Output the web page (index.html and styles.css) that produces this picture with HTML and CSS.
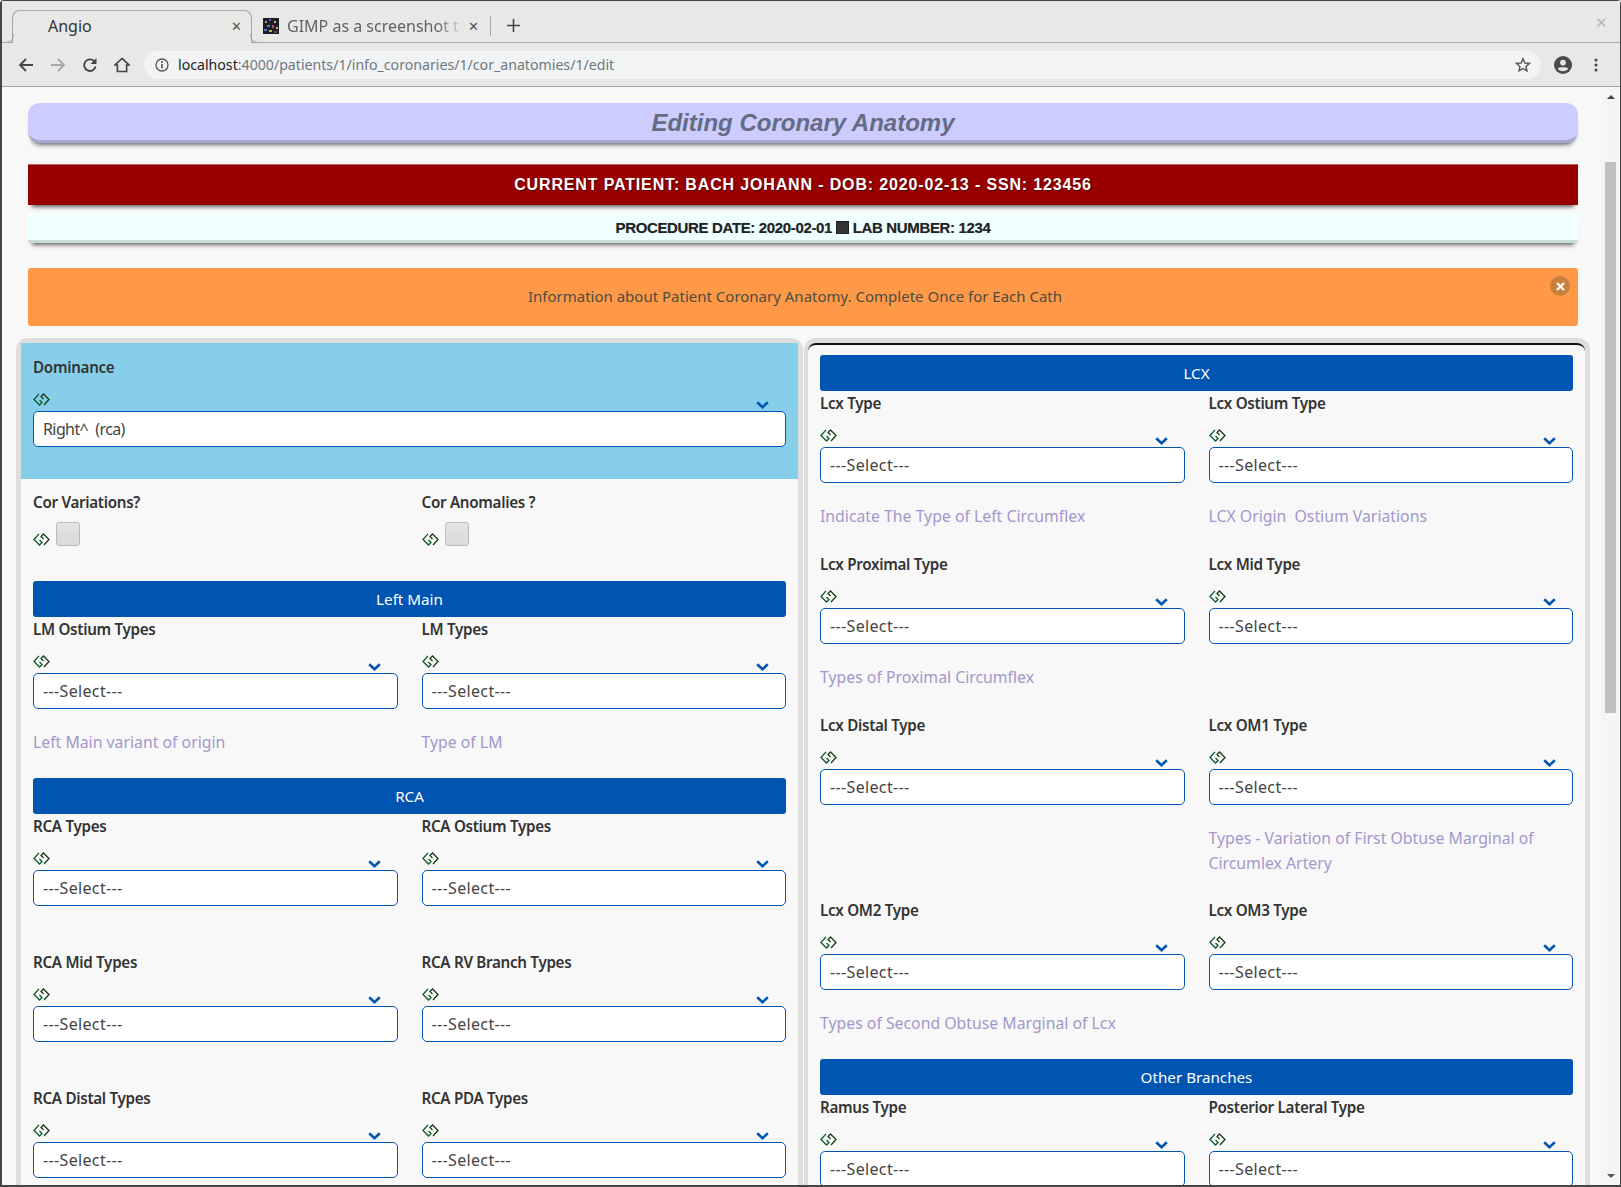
FILE: index.html
```html
<!DOCTYPE html>
<html>
<head>
  <title>Angio</title>
  <meta charset="UTF-8">
  <link rel="stylesheet" href="styles.css">
</head>
<body>
  <svg class="defs" width="0" height="0">
    <symbol id="link" viewBox="0 0 17 13">
      <path d="M6 .9 1 6.500 6.500 12 9 9.500 6.500 7" fill="none" stroke="#0b5a2a" stroke-width="1.300"/>
      <path d="M11 12 16 6.500 10.500 1 8 3.500 10.500 6" fill="none" stroke="#1a3d14" stroke-width="1.300"/>
    </symbol>
    <symbol id="chev" viewBox="0 0 13 8">
      <path d="M1.200 1.300 6.500 6.200 11.800 1.300" fill="none" stroke="#0055b3" stroke-width="2.600"/>
    </symbol>
  </svg>

  <div class="browser">
    <div class="tabstrip">
      <div class="tab tab-active">
        <span class="tab-title">Angio</span>
        <span class="tab-close">&#10005;</span>
      </div>
      <div class="tab tab-other">
        <svg class="favicon" width="16" height="16" viewBox="0 0 16 16">
          <rect width="16" height="16" fill="#1c1c30"/>
          <rect x="2" y="3" width="2" height="2" fill="#c9a227"/>
          <rect x="6" y="1" width="2" height="2" fill="#8a4fa8"/>
          <rect x="11" y="3" width="2" height="2" fill="#d0c040"/>
          <rect x="4" y="7" width="3" height="2" fill="#4f9a50"/>
          <rect x="9" y="7" width="2" height="3" fill="#c94f4f"/>
          <rect x="13" y="9" width="2" height="2" fill="#e0b030"/>
          <rect x="1" y="11" width="3" height="2" fill="#5a7ac0"/>
          <rect x="6" y="12" width="3" height="2" fill="#b8c040"/>
          <rect x="11" y="13" width="3" height="2" fill="#7a5020"/>
        </svg>
        <span class="tab-title">GIMP as a screenshot t</span>
        <span class="tab-close">&#10005;</span>
      </div>
      <span class="tab-sep"></span>
      <span class="tab-new">
        <svg width="13" height="13" viewBox="0 0 13 13"><path d="M6.500 0v13M0 6.500h13" stroke="#444" stroke-width="1.600"/></svg>
      </span>
      <span class="win-close">&#10005;</span>
    </div>

    <div class="toolbar">
      <svg class="tool" width="16" height="16" viewBox="0 0 16 16"><path d="M15 8H2M8 2 2 8l6 6" fill="none" stroke="#444" stroke-width="1.800"/></svg>
      <svg class="tool" width="16" height="16" viewBox="0 0 16 16"><path d="M1 8h13M8 2l6 6-6 6" fill="none" stroke="#a8a8a8" stroke-width="1.800"/></svg>
      <svg class="tool" width="16" height="16" viewBox="0 0 16 16"><path d="M13.600 9.500A5.800 5.800 0 1 1 12 4" fill="none" stroke="#444" stroke-width="1.900"/><path d="M14.500 1v6h-6z" fill="#444"/></svg>
      <svg class="tool" width="16" height="16" viewBox="0 0 16 16"><path d="M8 1.500 1 8h2.400v6.500h9.200V8H15z" fill="none" stroke="#444" stroke-width="1.700"/></svg>
      <div class="omnibox">
        <svg class="info" width="14" height="14" viewBox="0 0 14 14"><circle cx="7" cy="7" r="6" fill="none" stroke="#555" stroke-width="1.300"/><path d="M7 6v4.400" stroke="#555" stroke-width="1.600"/><circle cx="7" cy="3.900" r="1" fill="#555"/></svg>
        <span class="url"><b>localhost</b>:4000/patients/1/info_coronaries/1/cor_anatomies/1/edit</span>
        <svg class="star" width="16" height="16" viewBox="0 0 16 16"><path d="M8 1.800 9.900 6l4.500.4-3.400 3 1 4.500L8 11.500l-4 2.400 1-4.500-3.400-3L6.100 6z" fill="none" stroke="#555" stroke-width="1.400"/></svg>
      </div>
      <svg class="avatar" width="18" height="18" viewBox="0 0 18 18"><circle cx="9" cy="9" r="9" fill="#4a4a4a"/><circle cx="9" cy="6.600" r="2.900" fill="#e8e8e6"/><path d="M3.600 12.400C5 10.700 13 10.700 14.400 12.400 13.200 14.200 11.200 15.200 9 15.200S4.800 14.200 3.600 12.400z" fill="#e8e8e6"/></svg>
      <svg class="dots" width="4" height="14" viewBox="0 0 4 14"><circle cx="2" cy="2" r="1.500" fill="#444"/><circle cx="2" cy="7" r="1.500" fill="#444"/><circle cx="2" cy="12" r="1.500" fill="#444"/></svg>
    </div>

    <div class="viewport">
      <div class="page">
        <h1 class="page-title">Editing Coronary Anatomy</h1>
        <div class="patient">CURRENT PATIENT: BACH JOHANN - DOB: 2020-02-13 - SSN: 123456</div>
        <div class="procedure">PROCEDURE DATE: 2020-02-01 <span class="tofu"></span> LAB NUMBER: 1234</div>
        <div class="notice">
          Information about Patient Coronary Anatomy. Complete Once for Each Cath
          <span class="notice-close">
            <svg width="9" height="9" viewBox="0 0 9 9"><path d="M1 1l7 7M8 1 1 8" stroke="#fff" stroke-width="2.200"/></svg>
          </span>
        </div>

        <div class="panels">
          <div class="panel">
            <div class="dominance">
              <div class="field">
                <label>Dominance</label>
                <div class="field-head"><svg class="ico"><use href="#link"/></svg><svg class="chev"><use href="#chev"/></svg></div>
                <select class="picker"><option>Right^&nbsp; (rca)</option></select>
              </div>
            </div>
            <div class="panel-body">
              <div class="row row-checks">
                <div class="field">
                  <label>Cor Variations?</label>
                  <div class="check-line"><svg class="ico"><use href="#link"/></svg><input type="checkbox" class="check"></div>
                </div>
                <div class="field">
                  <label>Cor Anomalies ?</label>
                  <div class="check-line"><svg class="ico"><use href="#link"/></svg><input type="checkbox" class="check"></div>
                </div>
              </div>

              <div class="bar">Left Main</div>
              <div class="row">
                <div class="field">
                  <label>LM Ostium Types</label>
                  <div class="field-head"><svg class="ico"><use href="#link"/></svg><svg class="chev"><use href="#chev"/></svg></div>
                  <select class="picker"><option>---Select---</option></select>
                  <p class="help">Left Main variant of origin</p>
                </div>
                <div class="field">
                  <label>LM Types</label>
                  <div class="field-head"><svg class="ico"><use href="#link"/></svg><svg class="chev"><use href="#chev"/></svg></div>
                  <select class="picker"><option>---Select---</option></select>
                  <p class="help">Type of LM</p>
                </div>
              </div>

              <div class="bar">RCA</div>
              <div class="row">
                <div class="field">
                  <label>RCA Types</label>
                  <div class="field-head"><svg class="ico"><use href="#link"/></svg><svg class="chev"><use href="#chev"/></svg></div>
                  <select class="picker"><option>---Select---</option></select>
                </div>
                <div class="field">
                  <label>RCA Ostium Types</label>
                  <div class="field-head"><svg class="ico"><use href="#link"/></svg><svg class="chev"><use href="#chev"/></svg></div>
                  <select class="picker"><option>---Select---</option></select>
                </div>
                <div class="field">
                  <label>RCA Mid Types</label>
                  <div class="field-head"><svg class="ico"><use href="#link"/></svg><svg class="chev"><use href="#chev"/></svg></div>
                  <select class="picker"><option>---Select---</option></select>
                </div>
                <div class="field">
                  <label>RCA RV Branch Types</label>
                  <div class="field-head"><svg class="ico"><use href="#link"/></svg><svg class="chev"><use href="#chev"/></svg></div>
                  <select class="picker"><option>---Select---</option></select>
                </div>
                <div class="field">
                  <label>RCA Distal Types</label>
                  <div class="field-head"><svg class="ico"><use href="#link"/></svg><svg class="chev"><use href="#chev"/></svg></div>
                  <select class="picker"><option>---Select---</option></select>
                </div>
                <div class="field">
                  <label>RCA PDA Types</label>
                  <div class="field-head"><svg class="ico"><use href="#link"/></svg><svg class="chev"><use href="#chev"/></svg></div>
                  <select class="picker"><option>---Select---</option></select>
                </div>
              </div>
            </div>
          </div>

          <div class="panel panel-right">
            <div class="panel-body">
              <div class="bar">LCX</div>
              <div class="row">
                <div class="field">
                  <label>Lcx Type</label>
                  <div class="field-head"><svg class="ico"><use href="#link"/></svg><svg class="chev"><use href="#chev"/></svg></div>
                  <select class="picker"><option>---Select---</option></select>
                  <p class="help">Indicate The Type of Left Circumflex</p>
                </div>
                <div class="field">
                  <label>Lcx Ostium Type</label>
                  <div class="field-head"><svg class="ico"><use href="#link"/></svg><svg class="chev"><use href="#chev"/></svg></div>
                  <select class="picker"><option>---Select---</option></select>
                  <p class="help">LCX Origin&nbsp; Ostium Variations</p>
                </div>
                <div class="field">
                  <label>Lcx Proximal Type</label>
                  <div class="field-head"><svg class="ico"><use href="#link"/></svg><svg class="chev"><use href="#chev"/></svg></div>
                  <select class="picker"><option>---Select---</option></select>
                  <p class="help">Types of Proximal Circumflex</p>
                </div>
                <div class="field">
                  <label>Lcx Mid Type</label>
                  <div class="field-head"><svg class="ico"><use href="#link"/></svg><svg class="chev"><use href="#chev"/></svg></div>
                  <select class="picker"><option>---Select---</option></select>
                </div>
                <div class="field">
                  <label>Lcx Distal Type</label>
                  <div class="field-head"><svg class="ico"><use href="#link"/></svg><svg class="chev"><use href="#chev"/></svg></div>
                  <select class="picker"><option>---Select---</option></select>
                </div>
                <div class="field">
                  <label>Lcx OM1 Type</label>
                  <div class="field-head"><svg class="ico"><use href="#link"/></svg><svg class="chev"><use href="#chev"/></svg></div>
                  <select class="picker"><option>---Select---</option></select>
                  <p class="help">Types - Variation of First Obtuse Marginal of Circumlex Artery</p>
                </div>
                <div class="field">
                  <label>Lcx OM2 Type</label>
                  <div class="field-head"><svg class="ico"><use href="#link"/></svg><svg class="chev"><use href="#chev"/></svg></div>
                  <select class="picker"><option>---Select---</option></select>
                  <p class="help">Types of Second Obtuse Marginal of Lcx</p>
                </div>
                <div class="field">
                  <label>Lcx OM3 Type</label>
                  <div class="field-head"><svg class="ico"><use href="#link"/></svg><svg class="chev"><use href="#chev"/></svg></div>
                  <select class="picker"><option>---Select---</option></select>
                </div>
              </div>

              <div class="bar">Other Branches</div>
              <div class="row">
                <div class="field">
                  <label>Ramus Type</label>
                  <div class="field-head"><svg class="ico"><use href="#link"/></svg><svg class="chev"><use href="#chev"/></svg></div>
                  <select class="picker"><option>---Select---</option></select>
                </div>
                <div class="field">
                  <label>Posterior Lateral Type</label>
                  <div class="field-head"><svg class="ico"><use href="#link"/></svg><svg class="chev"><use href="#chev"/></svg></div>
                  <select class="picker"><option>---Select---</option></select>
                </div>
              </div>
            </div>
          </div>
        </div>
      </div>

      <div class="scrollbar">
        <span class="arrow-up"></span>
        <span class="thumb"></span>
        <span class="arrow-down"></span>
      </div>
    </div>
  </div>
</body>
</html>
```

FILE: styles.css
```css
* {
  box-sizing: border-box;
}
html, body {
  height: 100%;
  margin: 0;
  overflow: hidden;
}
body {
  font-family: "Noto Sans", "Open Sans", sans-serif;
  font-size: 16px;
  color: #333;
  background: #e8e8e6;
}
.defs {
  display: block;
  height: 0;
}
.browser {
  display: flex;
  flex-direction: column;
  height: 100vh;
  border: solid #444;
  border-width: 1px 1px 2px 2px;
  border-radius: 4px 4px 0 0;
}

/* tab strip */
.tabstrip {
  display: flex;
  align-items: flex-end;
  height: 42px;
  flex: none;
  background: #e8e8e6;
  border-bottom: 1px solid #a8a8a8;
  padding-left: 10px;
}
.tab {
  display: flex;
  align-items: center;
  height: 33px;
  padding-bottom: 2px;
  font-size: 16px;
  margin-bottom: -1px;
}
.tab-active {
  position: relative;
  width: 240px;
  padding-left: 35px;
  padding-right: 9px;
  color: #333;
  background: #e8e8e6;
  border: 1px solid #a8a8a8;
  border-bottom: 0;
  border-radius: 8px 8px 0 0;
}
.tab-active::before,
.tab-active::after {
  content: "";
  position: absolute;
  bottom: 0;
  width: 8px;
  height: 8px;
  border-bottom: 1px solid #a8a8a8;
}
.tab-active::before {
  left: -8px;
  border-right: 1px solid #a8a8a8;
  border-bottom-right-radius: 8px;
}
.tab-active::after {
  right: -8px;
  border-left: 1px solid #a8a8a8;
  border-bottom-left-radius: 8px;
}
.tab-title {
  flex: 1;
  white-space: nowrap;
}
.tab-close {
  flex: none;
  font-size: 13px;
  line-height: 16px;
  color: #555;
  width: 12px;
  text-align: center;
}
.tab-other {
  width: 236px;
  padding-left: 11px;
  padding-right: 9px;
  color: #5f6368;
}
.tab-other .tab-title {
  -webkit-mask-image: linear-gradient(to right, #000 150px, transparent 176px);
  mask-image: linear-gradient(to right, #000 150px, transparent 176px);
}
.favicon {
  flex: none;
  margin-right: 8px;
}
.tab-sep {
  width: 1px;
  height: 20px;
  background: #a8a8a8;
  margin: 0 0 6px 2px;
}
.tab-new {
  display: flex;
  margin: 0 0 10px 16px;
}
.win-close {
  margin: 0 12px 10px auto;
  font-size: 15px;
  color: #b5b5b5;
}

/* toolbar */
.toolbar {
  display: flex;
  align-items: center;
  height: 44px;
  flex: none;
  background: #e8e8e6;
  border-bottom: 1px solid #a8a8a8;
  padding-left: 16px;
}
.tool {
  margin-right: 16px;
  flex: none;
}
.omnibox {
  display: flex;
  align-items: center;
  flex: none;
  width: 1397px;
  height: 28px;
  margin-left: -2px;
  padding: 0 10px 0 11px;
  border-radius: 14px;
  background: #f1f3f4;
}
.info {
  flex: none;
}
.url {
  flex: 1;
  margin-left: 9px;
  font-size: 14.150px;
  color: #6f7880;
}
.url b {
  font-weight: 400;
  color: #222;
}
.avatar {
  margin-left: 13px;
}
.dots {
  margin-left: 22px;
}

/* page */
.viewport {
  display: flex;
  flex: 1;
  min-height: 0;
  background: #f8f8f8;
}
.page {
  flex: 1;
  min-width: 0;
  overflow: hidden;
  padding: 16px 12px 0 14px;
}
.scrollbar {
  display: flex;
  flex-direction: column;
  align-items: center;
  flex: none;
  width: 19px;
  background: #f5f5f5;
  padding-top: 8px;
}
.arrow-up {
  border: solid transparent;
  border-width: 0 4px 4px;
  border-bottom-color: #444;
}
.thumb {
  width: 11px;
  height: 551px;
  margin-top: 63px;
  background: #c1c1c1;
}
.arrow-down {
  margin-top: auto;
  margin-bottom: 7px;
  border: solid transparent;
  border-width: 4px 4px 0;
  border-top-color: #555;
}

.page-title {
  height: 40px;
  margin: 0 11px 21px 12px;
  background: #ccccff;
  border-bottom: 3px solid #a6a6d4;
  border-radius: 12px;
  box-shadow: 0 5px 4px -3px rgba(0, 0, 0, .55);
  font: italic bold 24px/40px "Liberation Sans", Arial, sans-serif;
  color: #636b85;
  text-align: center;
}
.patient {
  height: 41px;
  margin: 0 11px 8px 12px;
  background: #990000;
  border-top: 1px solid #c06060;
  box-shadow: 0 6px 4px -4px rgba(0, 0, 0, .6);
  font: bold 16px/39px "Liberation Sans", Arial, sans-serif;
  letter-spacing: .85px;
  color: #fff;
  text-shadow: 1px 1px 1px rgba(0, 0, 0, .5);
  text-align: center;
}
.procedure {
  height: 30px;
  margin: 0 11px 25px 12px;
  background: #f0ffff;
  border-bottom: 3px solid #c8dcd8;
  box-shadow: 0 6px 4px -4px rgba(0, 0, 0, .6);
  font: bold 15px/29px "Liberation Sans", Arial, sans-serif;
  letter-spacing: -.35px;
  color: #222;
  text-shadow: 0 0 1px rgba(0, 0, 0, .3);
  text-align: center;
}
.tofu {
  display: inline-block;
  width: 13px;
  height: 13px;
  background: #333;
  border: 1px solid #222;
  vertical-align: -1px;
}
.notice {
  position: relative;
  height: 58px;
  margin: 0 11px 12px 12px;
  padding-right: 16px;
  background: #ff9947;
  border-radius: 3px;
  font-size: 15px;
  line-height: 56px;
  color: #4d4d40;
  text-align: center;
}
.notice-close {
  position: absolute;
  top: 8px;
  right: 8px;
  display: flex;
  align-items: center;
  justify-content: center;
  width: 20px;
  height: 20px;
  border-radius: 50%;
  background: #c8803f;
}

/* form panels */
.panels {
  display: grid;
  grid-template-columns: 787px 786px;
  gap: 1px;
}
.panel {
  border: solid #dddddd;
  border-width: 5px 5px 0;
  border-radius: 12px 12px 0 0;
  min-height: 860px;
}
.panel-right {
  border-width: 5px 5px 0 4px;
}
.panel-right .panel-body {
  border-top: 2px solid #111;
  border-radius: 8px 8px 0 0;
  padding-top: 10px;
}
.dominance {
  background: #87ceeb;
  padding: 12px 12px 32px;
}
.panel-body {
  padding: 0 12px;
}
.row {
  display: grid;
  grid-template-columns: 1fr 1fr;
  column-gap: 24px;
}
.row-checks {
  padding-top: 11px;
  margin-bottom: 35px;
}
.field {
  min-width: 0;
  padding-bottom: 44px;
}
.dominance .field,
.row-checks .field {
  padding-bottom: 0;
}
.field label {
  display: block;
  height: 24px;
  font-size: 15.200px;
  font-weight: 600;
  letter-spacing: -.3px;
  line-height: 24px;
  color: #333;
}
.field-head {
  display: flex;
  justify-content: space-between;
  align-items: flex-end;
  height: 32px;
  padding: 0 17px 2px 0;
}
.ico {
  display: block;
  flex: none;
  width: 17px;
  height: 13px;
  margin-bottom: 3px;
}
.chev {
  display: block;
  width: 13px;
  height: 8px;
}
.picker {
  display: block;
  width: 100%;
  height: 36px;
  padding: 0 9px;
  border: 1px solid #0055b3;
  border-radius: 5px;
  background: #fff;
  font-family: inherit;
  font-size: 16px;
  letter-spacing: .35px;
  color: #444;
  appearance: none;
  -webkit-appearance: none;
}
.dominance .picker {
  letter-spacing: -.6px;
}
.check-line {
  display: flex;
  align-items: flex-end;
  gap: 6px;
  margin-top: 8px;
}
.check-line .ico {
  margin-bottom: 0;
}
.check {
  width: 24px;
  height: 24px;
  margin: 0;
  appearance: none;
  -webkit-appearance: none;
  border: 1px solid #bbb;
  border-radius: 3px;
  background: linear-gradient(#e4e4e4, #dadada);
}
.bar {
  height: 36px;
  background: #0055b3;
  border-radius: 3px;
  font-size: 15.200px;
  line-height: 36px;
  color: #fff;
  text-align: center;
}
.help {
  margin: 21px 0 -21.200px;
  font-size: 15.800px;
  line-height: 25px;
  color: #a397cc;
}
```
